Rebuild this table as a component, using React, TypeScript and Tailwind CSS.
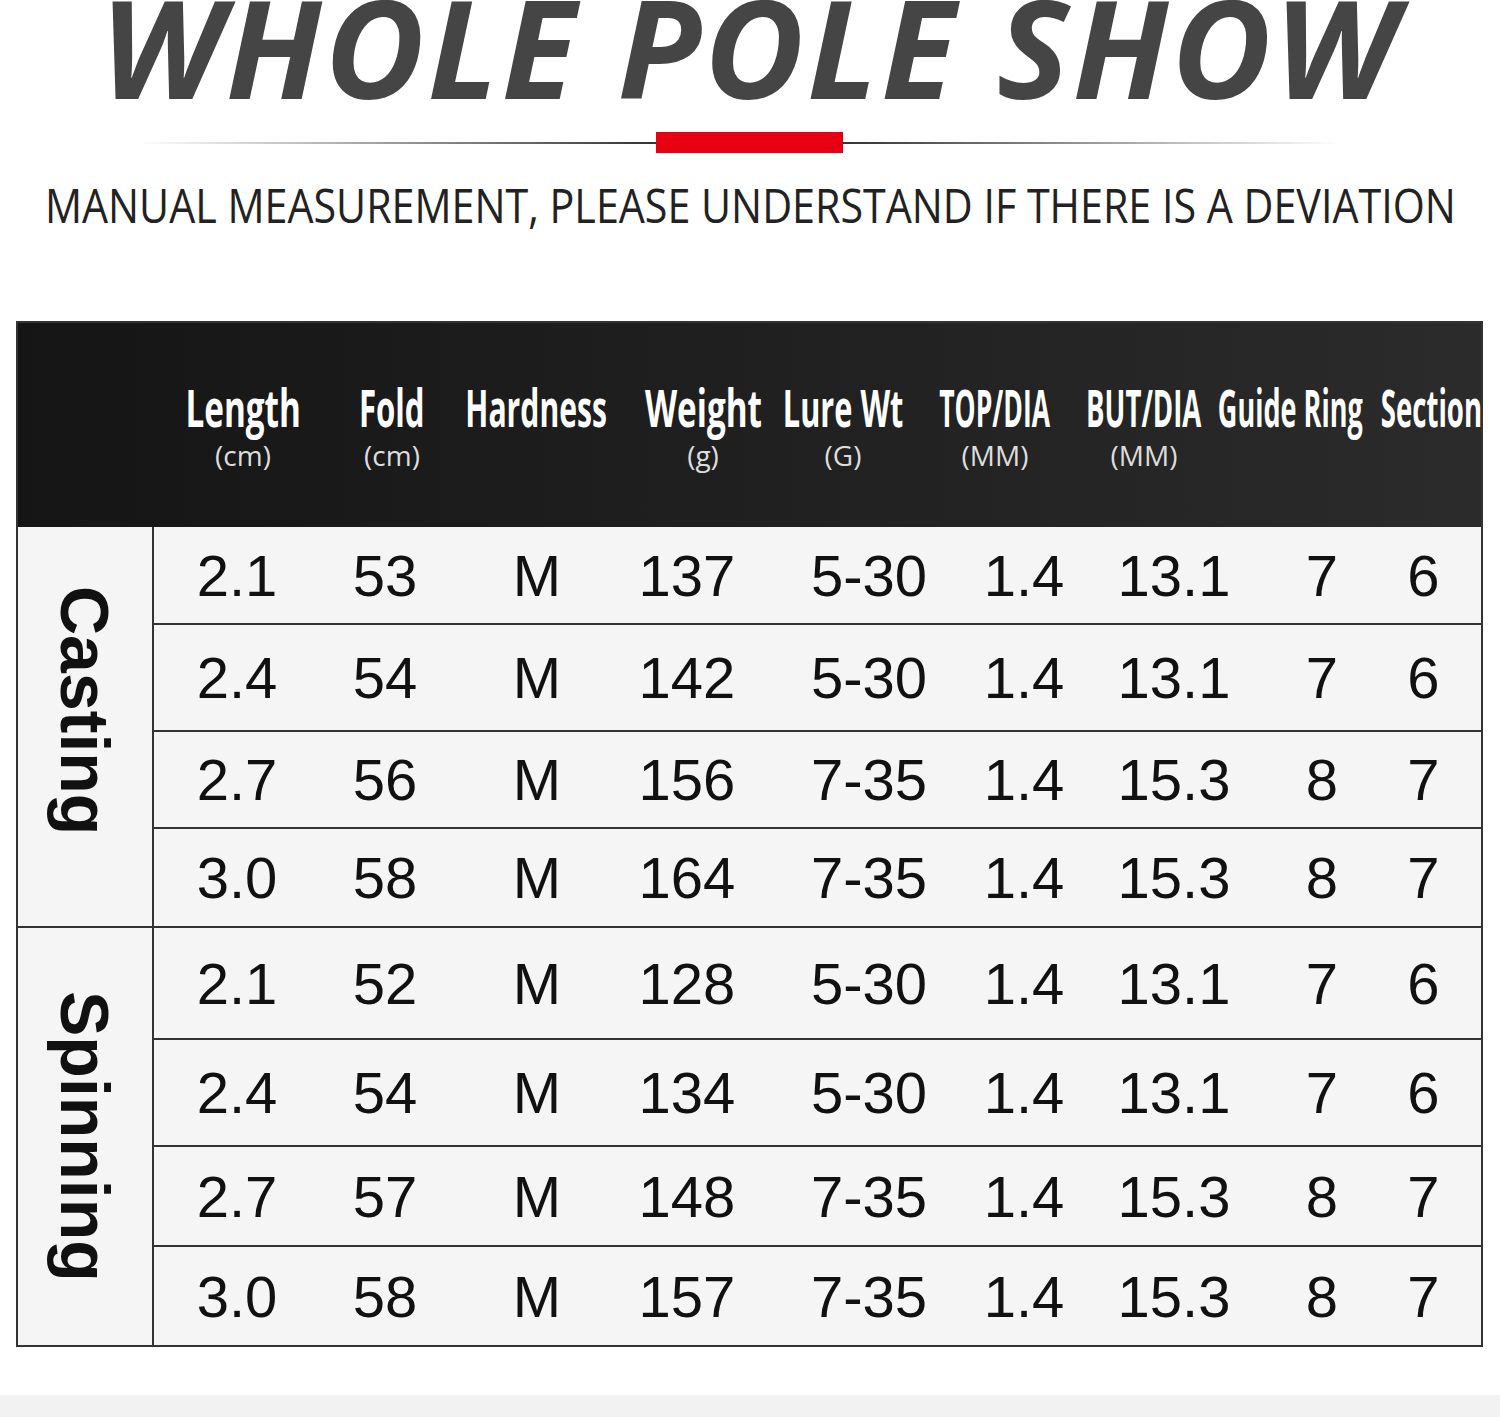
const heads = [
  { t: "Length", s: "(cm)", k: "scale-x-[0.64]" },
  { t: "Fold", s: "(cm)", k: "scale-x-[0.6]" },
  { t: "Hardness", k: "scale-x-[0.58]" },
  { t: "Weight", s: "(g)", k: "scale-x-[0.64]" },
  { t: "Lure Wt", s: "(G)", k: "scale-x-[0.59]" },
  { t: "TOP/DIA", s: "(MM)", k: "scale-x-[0.51]" },
  { t: "BUT/DIA", s: "(MM)", k: "scale-x-[0.53]" },
  { t: "Guide Ring", k: "scale-x-[0.52]" },
  { t: "Section", k: "scale-x-[0.53]" },
];

const casting = [
  { h: "h-[96px]", v: ["2.1", "53", "M", "137", "5-30", "1.4", "13.1", "7", "6"] },
  { h: "h-[107px]", v: ["2.4", "54", "M", "142", "5-30", "1.4", "13.1", "7", "6"] },
  { h: "h-[97px]", v: ["2.7", "56", "M", "156", "7-35", "1.4", "15.3", "8", "7"] },
  { h: "h-[99px]", v: ["3.0", "58", "M", "164", "7-35", "1.4", "15.3", "8", "7"] },
];

const spinning = [
  { h: "h-[110px]", v: ["2.1", "52", "M", "128", "5-30", "1.4", "13.1", "7", "6"] },
  { h: "h-[107px]", v: ["2.4", "54", "M", "134", "5-30", "1.4", "13.1", "7", "6"] },
  { h: "h-[100px]", v: ["2.7", "57", "M", "148", "7-35", "1.4", "15.3", "8", "7"] },
  { h: "h-[100px]", v: ["3.0", "58", "M", "157", "7-35", "1.4", "15.3", "8", "7"] },
];

function Rows({ rows }: { rows: { h: string; v: string[] }[] }) {
  return (
    <div className="flex-1 min-w-0 flex flex-col">
      {rows.map((r, i) => (
        <div
          key={i}
          className={`${r.h} ${i > 0 ? "border-t-2 border-[#333]" : ""} grid grid-cols-[166px_130px_174px_126px_238px_72px_228px_68px_minmax(0,1fr)] items-center`}
        >
          {r.v.map((c, j) => (
            <div key={j} className={`min-w-0 flex justify-center whitespace-nowrap ${j === 8 ? "pl-[10px]" : ""}`}>
              {c}
            </div>
          ))}
        </div>
      ))}
    </div>
  );
}

export default function App() {
  return (
    <div className="w-[1500px] h-[1417px] bg-white flex flex-col overflow-hidden">
      {/* title */}
      <div className="h-[132px] flex justify-center">
        <h1 className="-mt-[22px] text-[137px] leading-[137px] font-bold italic text-[#454545] tracking-[3px] whitespace-nowrap font-['Open_Sans',sans-serif]">
          WHOLE POLE SHOW
        </h1>
      </div>

      {/* divider */}
      <div className="h-[21px] flex items-center justify-center">
        <div className="w-[516px] h-[2px] bg-linear-to-r from-transparent to-[#333]" />
        <div className="w-[187px] h-[21px] bg-[#e60012]" />
        <div className="w-[497px] h-[2px] mr-[20px] bg-linear-to-r from-[#333] to-transparent" />
      </div>

      <div className="mt-[29px] h-[47px] flex justify-center">
        <p className="inline-block scale-x-[0.877] text-[47px] leading-[47px] text-[#222] whitespace-nowrap font-['Open_Sans',sans-serif]">
          MANUAL MEASUREMENT, PLEASE UNDERSTAND IF THERE IS A DEVIATION
        </p>
      </div>

      {/* table */}
      <div className="mt-[92px] ml-[16px] w-[1467px] border-2 border-[#333] bg-[#f5f5f5]">
        <div className="h-[204px] bg-linear-to-r from-[#151515] to-[#2b2b2b] grid grid-cols-[136px_178px_120px_168px_166px_114px_190px_108px_184px_minmax(0,1fr)] items-start text-white">
          <div />
          {heads.map((h) => (
            <div key={h.t} className="min-w-0 pt-[58px] flex flex-col items-center whitespace-nowrap">
              <span className={`inline-block ${h.k} text-[52px] leading-[52px] font-bold font-['Open_Sans',sans-serif]`}>
                {h.t}
              </span>
              {h.s && (
                <span className="mt-[7px] text-[28px] leading-[30px] text-[#ddd] font-['Open_Sans',sans-serif]">
                  {h.s}
                </span>
              )}
            </div>
          ))}
        </div>

        <div className="flex text-[58px] text-[#111] font-['Liberation_Sans',Arial,sans-serif]">
          <div className="w-[136px] shrink-0 border-r-2 border-[#333] flex items-center justify-center pb-[32px]">
            <span className="[writing-mode:vertical-rl] text-[68px] leading-none font-bold text-[#111]">Casting</span>
          </div>
          <Rows rows={casting} />
        </div>
        <div className="flex border-t-2 border-[#333] text-[58px] text-[#111] font-['Liberation_Sans',Arial,sans-serif]">
          <div className="w-[136px] shrink-0 border-r-2 border-[#333] flex items-center justify-center">
            <span className="[writing-mode:vertical-rl] text-[68px] leading-none font-bold text-[#111]">Spinning</span>
          </div>
          <Rows rows={spinning} />
        </div>
      </div>

      <div className="mt-auto h-[22px] bg-[#f2f2f2]" />
    </div>
  );
}
